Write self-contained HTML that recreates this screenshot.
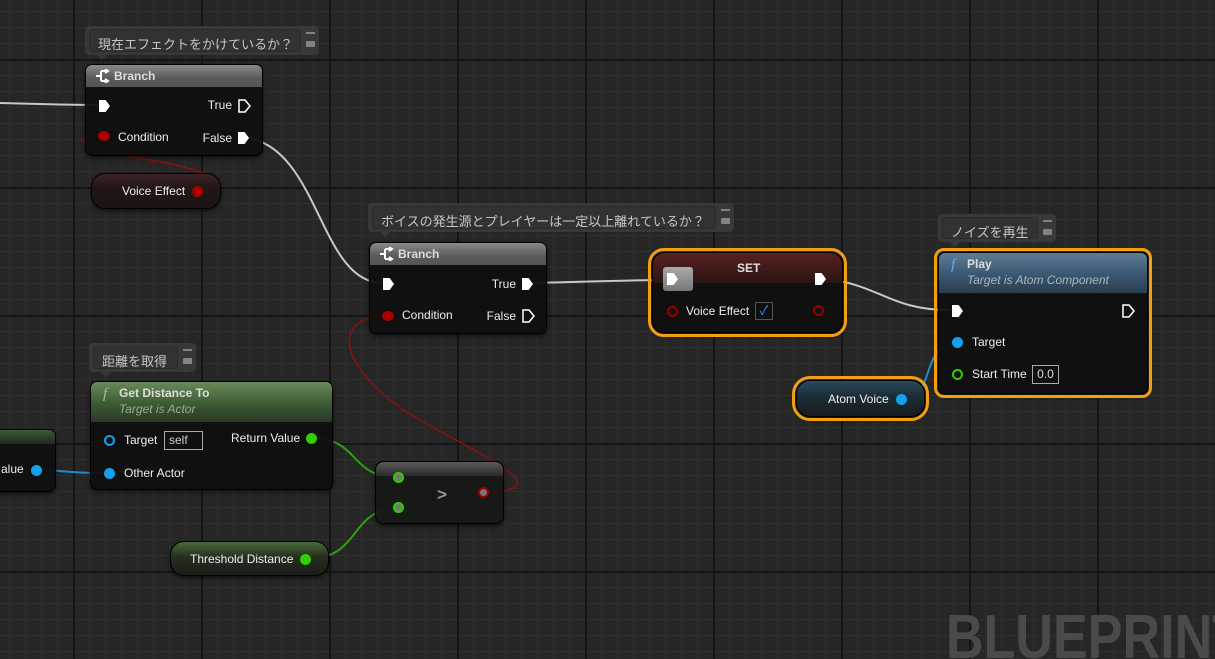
<!DOCTYPE html>
<html><head><meta charset="utf-8"><style>
*{margin:0;padding:0;box-sizing:border-box}
html,body{width:1215px;height:659px;overflow:hidden}
body{position:relative;background:#262626;font-family:"Liberation Sans","Noto Sans CJK JP",sans-serif;color:#e8e8e8;font-size:12px}
.grid{position:absolute;inset:0;background-image:
linear-gradient(90deg,#141414 0 2px,transparent 2px),
linear-gradient(180deg,#141414 0 2px,transparent 2px),
linear-gradient(90deg,#2f2f2f 0 1px,transparent 1px),
linear-gradient(180deg,#2f2f2f 0 1px,transparent 1px);
background-size:128px 128px,128px 128px,16px 16px,16px 16px;
background-position:73px 0,0 59px,9px 0,0 11px}
.wm{position:absolute;left:946px;top:603px;font-weight:bold;font-size:62px;line-height:70px;color:#4a4a4a;transform:scaleX(.84);transform-origin:0 0;white-space:nowrap}
svg{position:absolute;left:0;top:0}
.cm{position:absolute;background:#3a3a3a;border-radius:4px;opacity:.95}
.cm .t{position:absolute;left:4px;top:3px;bottom:3px;background:#333;border:1px solid #2b2b2b;border-radius:4px;color:#cfcfcf;font-size:13px;padding:4px 8px;white-space:nowrap}
.cm .p{position:absolute;right:4px;top:6px;width:9px;height:14px;border-top:2px solid #888;}
.cm .p:after{content:"";position:absolute;left:0;top:7px;width:9px;height:6px;background:#888;border-radius:1px}
.cm:after{content:"";position:absolute;left:12px;bottom:-5px;border:5px solid transparent;border-top-color:#3a3a3a;border-bottom:0}
.node{position:absolute;background:rgba(14,15,14,.94);border-radius:7px;border:1px solid #000;box-shadow:0 2px 4px rgba(0,0,0,.6)}
.hd{position:absolute;left:0;right:0;top:0;border-radius:6px 6px 0 0;font-weight:bold;color:#ddd;padding-left:28px}
.lbl{position:absolute;white-space:nowrap;font-size:12px;color:#eee}
.ex{position:absolute;width:11px;height:12px;background:#fff;clip-path:polygon(0 0,60% 0,100% 50%,60% 100%,0 100%)}
.dot{position:absolute;width:11px;height:11px;border-radius:50%}
.var{position:absolute;border-radius:14px;border:1px solid #000;box-shadow:0 2px 4px rgba(0,0,0,.6)}
.orange{outline:3px solid #f0a010;outline-offset:1px}
</style></head><body>
<div class="grid"></div>
<div class="wm">BLUEPRINT</div>

<svg width="1215" height="659">
<g fill="none" stroke-width="2">
<path d="M0 103 C40 104 60 105 98 105" stroke="#c8c8c8"/>
<path d="M248 138 C320 150 320 285 384 283" stroke="#c8c8c8"/>
<path d="M530 283 C590 282 620 280 668 280" stroke="#c8c8c8"/>
<path d="M826 279 C880 285 890 310 950 310" stroke="#c8c8c8"/>
<path d="M103 136 C60 138 90 150 150 160 C210 170 240 186 200 190" stroke="#8a1010" stroke-width="1.5"/>
<path d="M386 315 C320 320 350 380 420 420 C490 460 560 490 486 492" stroke="#8a1010" stroke-width="1.5"/>
<path d="M36 469 C70 472 80 473 110 473" stroke="#1a8ed0"/>
<path d="M905 398 C935 398 920 345 957 342" stroke="#1a8ed0"/>
<path d="M314 438 C360 440 350 477 398 478" stroke="#2ca010"/>
<path d="M308 558 C360 560 350 508 398 508" stroke="#2ca010"/>
</g></svg>

<div class="cm" style="left:85px;top:26px;width:234px;height:29px"><div class="t" style="right:18px">現在エフェクトをかけているか？</div><div class="p"></div></div>
<div class="cm" style="left:368px;top:203px;width:366px;height:29px"><div class="t" style="right:18px">ボイスの発生源とプレイヤーは一定以上離れているか？</div><div class="p"></div></div>
<div class="cm" style="left:938px;top:214px;width:118px;height:28px"><div class="t" style="right:18px">ノイズを再生</div><div class="p"></div></div>
<div class="cm" style="left:89px;top:343px;width:107px;height:29px"><div class="t" style="right:18px">距離を取得</div><div class="p"></div></div>

<!-- Branch 1 -->
<div class="node" style="left:85px;top:64px;width:178px;height:92px">
<div class="hd" style="height:22px;line-height:22px;background:linear-gradient(180deg,#8a8a8a,#5a5a5a 60%,#555)">Branch</div>
<svg style="left:9px;top:4px" width="16" height="14"><path d="M1 7H6M6 2V12M6 2H12M6 12H12M10 0L13 2L10 4M10 10L13 12L10 14" fill="none" stroke="#fff" stroke-width="2"/></svg>
<div class="ex" style="left:13px;top:35px"></div>
<div class="lbl" style="right:30px;top:33px">True</div>
<svg style="left:152px;top:34px;position:absolute" width="13" height="14"><path d="M1 1H7L12 7L7 13H1Z" fill="none" stroke="#fff" stroke-width="1.5"/></svg>
<div class="dot" style="left:12px;top:66px;background:#a00;width:12px;height:10px"></div>
<div class="lbl" style="left:32px;top:65px">Condition</div>
<div class="lbl" style="right:30px;top:66px">False</div>
<div class="ex" style="left:152px;top:67px"></div>
</div>
<div class="var" style="left:91px;top:173px;width:130px;height:36px;background:linear-gradient(180deg,#3a2424,#241616 40%,#1a1414)">
<div class="lbl" style="left:30px;top:10px">Voice Effect</div>
<div class="dot" style="left:100px;top:12px;background:#a00"></div></div>

<!-- Branch 2 -->
<div class="node" style="left:369px;top:242px;width:178px;height:92px">
<div class="hd" style="height:22px;line-height:22px;background:linear-gradient(180deg,#8a8a8a,#5a5a5a 60%,#555)">Branch</div>
<svg style="left:9px;top:4px" width="16" height="14"><path d="M1 7H6M6 2V12M6 2H12M6 12H12M10 0L13 2L10 4M10 10L13 12L10 14" fill="none" stroke="#fff" stroke-width="2"/></svg>
<div class="ex" style="left:13px;top:35px"></div>
<div class="lbl" style="right:30px;top:34px">True</div>
<div class="ex" style="left:152px;top:35px"></div>
<div class="dot" style="left:12px;top:68px;background:#a00;width:12px;height:10px"></div>
<div class="lbl" style="left:32px;top:65px">Condition</div>
<div class="lbl" style="right:30px;top:66px">False</div>
<svg style="left:152px;top:66px" width="13" height="14"><path d="M1 1H7L12 7L7 13H1Z" fill="none" stroke="#fff" stroke-width="1.5"/></svg>
</div>

<!-- SET -->
<div class="node orange" style="left:652px;top:252px;width:191px;height:81px;border-radius:12px">
<div style="position:absolute;left:0;right:0;top:0;height:30px;border-radius:12px 12px 0 0;background:linear-gradient(180deg,#5a2020,#2a1515)"></div>
<div class="lbl" style="left:84px;top:8px;font-weight:bold;color:#ddd">SET</div>
<div style="position:absolute;left:10px;top:14px;width:30px;height:24px;background:linear-gradient(#aaa,#777);border-radius:3px"></div>
<div class="ex" style="left:14px;top:20px"></div>
<div class="ex" style="left:162px;top:20px"></div>
<div class="dot" style="left:14px;top:53px;border:2px solid #900"></div>
<div class="lbl" style="left:33px;top:51px">Voice Effect</div>
<div style="position:absolute;left:102px;top:49px;width:18px;height:18px;background:#0f0f0f;border:1px solid #555;color:#2a8ff0;font-size:13px;text-align:center;line-height:16px">✓</div>
<div class="dot" style="left:160px;top:52px;border:2px solid #900"></div>
</div>

<!-- Play -->
<div class="node orange" style="left:938px;top:252px;width:210px;height:142px;border-radius:6px">
<div class="hd" style="height:40px;background:linear-gradient(180deg,#5d7e98,#3a5670 55%,#2a3e50);padding-top:4px">Play<div style="font-weight:normal;font-style:italic;color:#a9b7c0;font-size:12px;margin-top:2px">Target is Atom Component</div></div>
<div style="position:absolute;left:12px;top:4px;color:#6aaaee;font-style:italic;font-family:'Liberation Serif',serif;font-size:15px">f</div>
<div class="ex" style="left:13px;top:52px"></div>
<svg style="left:183px;top:51px" width="13" height="14"><path d="M1 1H7L12 7L7 13H1Z" fill="none" stroke="#fff" stroke-width="1.5"/></svg>
<div class="dot" style="left:13px;top:84px;background:#12a0ef"></div>
<div class="lbl" style="left:33px;top:82px">Target</div>
<div class="dot" style="left:13px;top:116px;border:2px solid #3c0"></div>
<div class="lbl" style="left:33px;top:114px">Start Time</div>
<div style="position:absolute;left:93px;top:112px;width:27px;height:19px;border:1px solid #aaa;color:#ddd;text-align:center;line-height:17px">0.0</div>
</div>
<div class="var orange" style="left:796px;top:380px;width:129px;height:37px;background:linear-gradient(180deg,#294a5c,#1c2c36 45%,#181c1e)">
<div class="lbl" style="left:31px;top:11px">Atom Voice</div>
<div class="dot" style="left:99px;top:13px;background:#12a0ef"></div></div>

<!-- Get Distance -->
<div class="node" style="left:90px;top:381px;width:243px;height:109px">
<div class="hd" style="height:40px;background:linear-gradient(180deg,#6a8a5a,#3c5a34 55%,#2a3a26);padding-top:4px">Get Distance To<div style="font-weight:normal;font-style:italic;color:#9aab8e;font-size:12px;margin-top:2px">Target is Actor</div></div>
<div style="position:absolute;left:12px;top:4px;color:#8fd07a;font-style:italic;font-family:'Liberation Serif',serif;font-size:15px">f</div>
<div class="dot" style="left:13px;top:53px;border:2px solid #12a0ef"></div>
<div class="lbl" style="left:33px;top:51px">Target</div>
<div style="position:absolute;left:73px;top:49px;width:39px;height:19px;border:1px solid #aaa;color:#ccc;padding-left:4px;line-height:17px">self</div>
<div class="lbl" style="left:140px;top:49px">Return Value</div>
<div class="dot" style="left:215px;top:51px;background:#3c0"></div>
<div class="dot" style="left:13px;top:86px;background:#12a0ef"></div>
<div class="lbl" style="left:33px;top:84px">Other Actor</div>
</div>
<div class="node" style="left:-8px;top:429px;width:64px;height:63px">
<div style="position:absolute;left:0;right:0;top:0;height:14px;border-radius:6px 6px 0 0;background:linear-gradient(#3c5a34,#20281e)"></div>
<div class="lbl" style="left:8px;top:32px">alue</div>
<div class="dot" style="left:38px;top:35px;background:#12a0ef"></div></div>

<!-- > node -->
<div class="node" style="left:375px;top:461px;width:129px;height:63px;border-radius:8px;background:rgba(22,24,22,.95)">
<div style="position:absolute;left:0;right:0;top:0;height:14px;border-radius:8px 8px 0 0;background:linear-gradient(#5a5a5a,#2a2a2a)"></div>
<div class="dot" style="left:17px;top:10px;border:2px solid #3c0;background:#777"></div>
<div class="dot" style="left:17px;top:40px;border:2px solid #3c0;background:#777"></div>
<div class="lbl" style="left:61px;top:23px;font-size:17px;font-weight:bold;color:#999">&gt;</div>
<div class="dot" style="left:102px;top:25px;border:2px solid #900;background:#777"></div>
</div>
<div class="var" style="left:170px;top:541px;width:159px;height:35px;background:linear-gradient(180deg,#4a6a3a,#24301e 45%,#1a1c19)">
<div class="lbl" style="left:19px;top:10px">Threshold Distance</div>
<div class="dot" style="left:129px;top:12px;background:#3c0"></div></div>
</body></html>
